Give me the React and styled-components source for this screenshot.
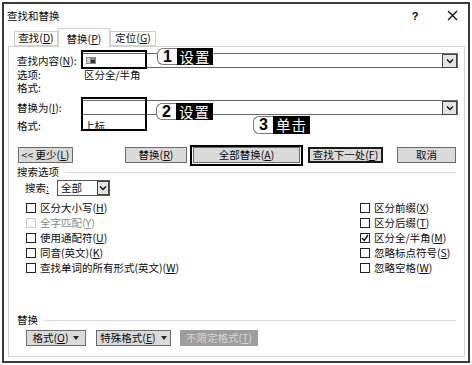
import React from 'react';
import styled, { createGlobalStyle } from 'styled-components';

const Global = createGlobalStyle`
  html, body { margin: 0; padding: 0; background: #fff; }
  body {
    font-family: "Noto Sans CJK SC", "Noto Sans", sans-serif;
    font-size: 10.5px;
    line-height: 12px;
    color: #0a0a0a;
  }
  * { box-sizing: border-box; }
`;

const Stage = styled.div`
  position: relative;
  width: 472px;
  height: 365px;
  padding: 2px 2px 0 2px;
  overflow: hidden;
`;

const Dialog = styled.div`
  width: 468px;
  height: 361px;
  border: 2px solid #3a3a3a;
  background: #fff;
  display: flex;
  flex-direction: column;
`;

const TitleBar = styled.div`
  height: 23px;
  display: flex;
  align-items: center;
  padding-left: 3px;
`;

const Title = styled.span`
  flex: 1;
`;

const Help = styled.span`
  width: 12px;
  text-align: center;
  font-family: "Liberation Sans", sans-serif;
  font-weight: bold;
  font-size: 11px;
  margin-right: 21px;
`;

const Close = styled.span`
  width: 20px;
  height: 14px;
  display: flex;
  align-items: center;
  justify-content: center;
  margin-right: 6px;
`;

const TabStrip = styled.div`
  height: 19px;
  display: flex;
  align-items: flex-end;
  margin-left: 10px;
`;

const Tab = styled.div`
  width: ${p => p.$w}px;
  height: ${p => (p.$active ? 19 : 15)}px;
  margin-bottom: ${p => (p.$active ? -1 : 0)}px;
  border: 1px solid #cfcfcf;
  border-bottom: ${p => (p.$active ? 'none' : '1px solid #cfcfcf')};
  background: #fff;
  position: relative;
  z-index: ${p => (p.$active ? 1 : 0)};
  display: flex;
  align-items: flex-end;
  justify-content: center;
  padding-bottom: ${p => (p.$active ? 2 : 1)}px;
  white-space: nowrap;
`;

const Panel = styled.div`
  margin: 0 3px 0 4px;
  height: 311px;
  border: 1px solid #d4d4d4;
  padding: 6px 6px 0 8px;
  display: flex;
  flex-direction: column;
`;

const FieldRow = styled.div`
  display: flex;
  align-items: center;
  height: 15px;
  margin-top: ${p => p.$mt || 0}px;
`;

const Label = styled.span`
  width: ${p => p.$w || 65}px;
  flex: none;
  white-space: nowrap;
`;

const Combo = styled.div`
  flex: 1;
  height: 15px;
  border: 1px solid #6a6a6a;
  background: #fff;
  display: flex;
  align-items: center;
  justify-content: space-between;
  padding-left: 3px;
`;

const DropBtn = styled.div`
  width: ${p => p.$w || 15}px;
  height: ${p => p.$h || 14}px;
  border: 1px solid #444;
  background: #e4e4e4;
  display: flex;
  align-items: center;
  justify-content: center;
  flex: none;
`;

const InfoRow = styled.div`
  display: flex;
  align-items: center;
  height: 13px;
  margin-top: ${p => p.$mt || 0}px;
  white-space: nowrap;
`;

const ButtonRow = styled.div`
  display: flex;
  align-items: center;
  height: 16px;
  margin-top: ${p => p.$mt || 0}px;
  padding-left: ${p => p.$pl || 0}px;
`;

const Button = styled.div`
  width: ${p => p.$w}px;
  height: 16px;
  margin-left: ${p => p.$gap || 0}px;
  flex: none;
  display: flex;
  align-items: center;
  justify-content: center;
  gap: 5px;
  white-space: nowrap;
  background: ${p => (p.$disabled ? '#9d9d9d' : '#dadada')};
  color: ${p => (p.$disabled ? '#d6d6d6' : '#0a0a0a')};
  border: ${p => (p.$default ? '2px solid #1a1a1a' : p.$disabled ? '1px solid #9d9d9d' : '1px solid #6b6b6b')};
`;

const SectionHead = styled.div`
  display: flex;
  align-items: center;
  height: 12px;
  margin-top: ${p => p.$mt || 0}px;
  &::after {
    content: '';
    flex: 1;
    height: 1px;
    background: #dcdcdc;
    margin: 0 2px 0 6px;
  }
`;

const SearchRow = styled.div`
  display: flex;
  align-items: center;
  height: 16px;
  margin-top: 2px;
  padding-left: 8px;
`;

const Select = styled.div`
  width: 53px;
  height: 16px;
  border: 1px solid #555;
  display: flex;
  align-items: center;
  justify-content: space-between;
  padding-left: 3px;
`;

const OptionGrid = styled.div`
  display: grid;
  grid-template-columns: 334px 1fr;
  grid-auto-rows: 15px;
  margin-top: 4px;
  padding-left: 9px;
`;

const Option = styled.div`
  display: flex;
  align-items: center;
  gap: 4px;
  white-space: nowrap;
  color: ${p => (p.$disabled ? '#8a8a8a' : '#0a0a0a')};
`;

const Box = styled.span`
  width: 10px;
  height: 10px;
  flex: none;
  border: 1.5px solid ${p => (p.$disabled ? '#c8c8c8' : '#222')};
  background: #fff;
  display: flex;
  align-items: center;
  justify-content: center;
`;

const Key = styled.u`
  text-decoration: underline;
  text-underline-offset: 1px;
`;

/* annotations that lie over the dialog */
const Highlight = styled.div`
  position: absolute;
  left: ${p => p.$x}px;
  top: ${p => p.$y}px;
  width: ${p => p.$w}px;
  height: ${p => p.$h}px;
  border: 2.5px solid #000;
  pointer-events: none;
`;

const Callout = styled.div`
  position: absolute;
  left: ${p => p.$x}px;
  top: ${p => p.$y}px;
  height: ${p => p.$h || 17}px;
  display: flex;
`;

const CalloutNum = styled.span`
  width: 20px;
  background: #fff;
  border: 1.5px solid #7a7a7a;
  border-right: none;
  border-radius: 6px 0 0 6px;
  display: flex;
  align-items: center;
  justify-content: center;
  font-family: "Liberation Sans", "DejaVu Sans", sans-serif;
  font-weight: bold;
  font-size: 16px;
  color: #000;
`;

const CalloutWord = styled.span`
  width: ${p => p.$w || 36}px;
  background: #000;
  color: #fff;
  display: flex;
  align-items: center;
  justify-content: center;
  font-size: 14.5px;
  letter-spacing: 1px;
`;

const Chevron = () => (
  <svg width="8" height="6" viewBox="0 0 8 6">
    <polyline points="1,1.5 4,4.5 7,1.5" fill="none" stroke="#111" strokeWidth="1.4" />
  </svg>
);

const Caret = () => (
  <svg width="6" height="4" viewBox="0 0 6 4">
    <polygon points="0,0 6,0 3,4" fill="#222" />
  </svg>
);

const Check = () => (
  <svg width="8" height="8" viewBox="0 0 8 8">
    <polyline points="1,4 3.2,6.4 7,1" fill="none" stroke="#111" strokeWidth="1.4" />
  </svg>
);

const FormatMark = () => (
  <svg width="10" height="7" viewBox="0 0 10 7">
    <rect x="0" y="0" width="10" height="7" fill="#8a8a8a" />
    <rect x="1" y="1" width="3" height="5" fill="#d0d0d0" />
    <rect x="5" y="3" width="4" height="3" fill="#333" />
  </svg>
);

const CloseIcon = () => (
  <svg width="11" height="11" viewBox="0 0 11 11">
    <path d="M1 1 L10 10 M10 1 L1 10" stroke="#111" strokeWidth="1.4" />
  </svg>
);

const leftOpts = [
  { t: '区分大小写', k: 'H' },
  { t: '全字匹配', k: 'Y', disabled: true },
  { t: '使用通配符', k: 'U' },
  { t: '同音(英文)', k: 'K' },
  { t: '查找单词的所有形式(英文)', k: 'W' },
];
const rightOpts = [
  { t: '区分前缀', k: 'X' },
  { t: '区分后缀', k: 'T' },
  { t: '区分全/半角', k: 'M', checked: true },
  { t: '忽略标点符号', k: 'S' },
  { t: '忽略空格', k: 'W' },
];

export default function App() {
  const rows = [];
  leftOpts.forEach((o, i) => {
    const r = rightOpts[i];
    rows.push(
      <Option key={'l' + i} $disabled={o.disabled}>
        <Box $disabled={o.disabled}>{o.checked && <Check />}</Box>
        <span>{o.t}(<Key>{o.k}</Key>)</span>
      </Option>
    );
    rows.push(
      <Option key={'r' + i}>
        <Box>{r.checked && <Check />}</Box>
        <span>{r.t}(<Key>{r.k}</Key>)</span>
      </Option>
    );
  });

  return (
    <>
      <Global />
      <Stage>
        <Dialog>
          <TitleBar>
            <Title>查找和替换</Title>
            <Help>?</Help>
            <Close><CloseIcon /></Close>
          </TitleBar>
          <TabStrip>
            <Tab $w={44}><span>查找(<Key>D</Key>)</span></Tab>
            <Tab $w={52} $active><span>替换(<Key>P</Key>)</span></Tab>
            <Tab $w={46}><span>定位(<Key>G</Key>)</span></Tab>
          </TabStrip>
          <Panel>
            <FieldRow>
              <Label>查找内容(<Key>N</Key>):</Label>
              <Combo>
                <FormatMark />
                <DropBtn><Chevron /></DropBtn>
              </Combo>
            </FieldRow>
            <InfoRow>
              <Label $w={67}>选项:</Label>
              <span>区分全/半角</span>
            </InfoRow>
            <InfoRow>
              <Label $w={67}>格式:</Label>
            </InfoRow>

            <FieldRow $mt={6}>
              <Label>替换为(<Key>I</Key>):</Label>
              <Combo>
                <span />
                <DropBtn><Chevron /></DropBtn>
              </Combo>
            </FieldRow>
            <InfoRow $mt={4}>
              <Label $w={67}>格式:</Label>
              <span>上标</span>
            </InfoRow>

            <ButtonRow $mt={15} $pl={1}>
              <Button $w={55}><span>&lt;&lt; 更少(<Key>L</Key>)</span></Button>
              <Button $w={62} $gap={52}><span>替换(<Key>R</Key>)</span></Button>
              <Button $w={107} $gap={6}><span>全部替换(<Key>A</Key>)</span></Button>
              <Button $w={75} $gap={8} $default><span>查找下一处(<Key>F</Key>)</span></Button>
              <Button $w={59} $gap={14}><span>取消</span></Button>
            </ButtonRow>

            <SectionHead $mt={3}>搜索选项</SectionHead>
            <SearchRow>
              <Label $w={32}>搜索<Key>:</Key></Label>
              <Select>
                <span>全部</span>
                <DropBtn $w={12} $h={14}><Chevron /></DropBtn>
              </Select>
            </SearchRow>
            <OptionGrid>{rows}</OptionGrid>

            <SectionHead $mt={39}>替换</SectionHead>
            <ButtonRow $mt={4} $pl={9}>
              <Button $w={60}><span>格式(<Key>O</Key>)</span><Caret /></Button>
              <Button $w={75} $gap={10}><span>特殊格式(<Key>E</Key>)</span><Caret /></Button>
              <Button $w={78} $gap={9} $disabled><span>不限定格式(<Key>T</Key>)</span></Button>
            </ButtonRow>
          </Panel>
        </Dialog>

        <Highlight $x={81} $y={50} $w={66} $h={19} />
        <Highlight $x={81} $y={97} $w={66} $h={34} />
        <Highlight $x={190} $y={145} $w={113} $h={21} />

        <Callout $x={157} $y={48}>
          <CalloutNum>1</CalloutNum>
          <CalloutWord $w={36}>设置</CalloutWord>
        </Callout>
        <Callout $x={156} $y={103}>
          <CalloutNum>2</CalloutNum>
          <CalloutWord $w={37}>设置</CalloutWord>
        </Callout>
        <Callout $x={253} $y={116} $h={18}>
          <CalloutNum>3</CalloutNum>
          <CalloutWord $w={37}>单击</CalloutWord>
        </Callout>
      </Stage>
    </>
  );
}
